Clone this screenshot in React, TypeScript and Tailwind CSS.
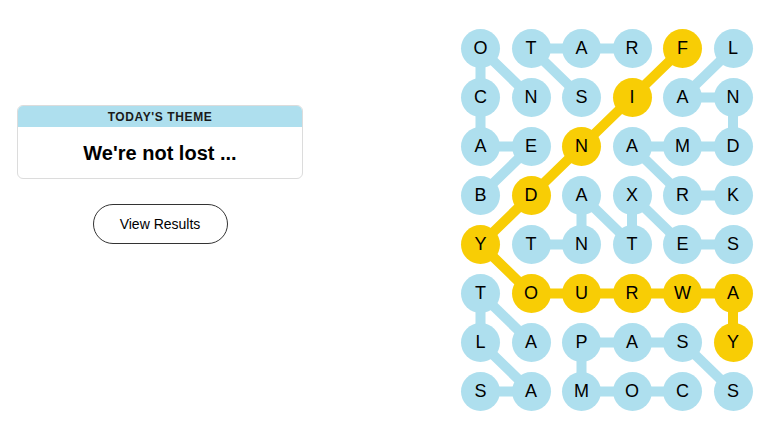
import React from "react";

const rows = [
  "OTARFL",
  "CNSIAN",
  "AENAMD",
  "BDAXRK",
  "YTNTES",
  "TOURWA",
  "LAPASY",
  "SAMOCS",
];

// spangram cells: [row, col]
const spangram: [number, number][] = [
  [0, 4], [1, 3], [2, 2], [3, 1], [4, 0], [5, 1], [5, 2], [5, 3], [5, 4], [5, 5], [6, 5],
];

// found word paths (blue)
const words: [number, number][][] = [
  [[1, 1], [0, 0], [1, 0], [2, 0], [2, 1], [3, 0]],
  [[1, 2], [0, 1], [0, 2], [0, 3]],
  [[0, 5], [1, 4], [1, 5], [2, 5], [2, 4], [2, 3], [3, 4], [3, 5]],
  [[4, 1], [4, 2], [3, 2], [4, 3], [3, 3], [4, 4], [4, 5]],
  [[5, 0], [6, 1]],
  [[5, 0], [6, 0], [7, 1], [7, 0]],
  [[6, 4], [6, 3], [6, 2], [7, 2], [7, 3], [7, 4]],
  [[6, 4], [7, 5]],
];

const COL = 50.5;
const ROW = 49;
const R = 19.5;

const isSpan = (r: number, c: number) => spangram.some(([a, b]) => a === r && b === c);

function pts(path: [number, number][]) {
  return path.map(([r, c]) => `${R + c * COL},${R + r * ROW}`).join(" ");
}

function Board() {
  return (
    <div className="relative w-[292px] h-[382px]">
      <svg className="absolute inset-0" width="292" height="382">
        {words.map((w, i) => (
          <polyline key={i} points={pts(w)} fill="none" stroke="#aedfee" strokeWidth="10" strokeLinejoin="round" />
        ))}
        <polyline points={pts(spangram)} fill="none" stroke="#f8cd05" strokeWidth="10" strokeLinejoin="round" />
      </svg>
      <div className="relative grid grid-cols-[repeat(6,39px)] gap-x-[11.5px] gap-y-[10px]">
        {rows.map((row, r) =>
          row.split("").map((ch, c) => (
            <div
              key={`${r}-${c}`}
              className={`w-[39px] h-[39px] rounded-full flex items-center justify-center text-[18px] text-black ${
                isSpan(r, c) ? "bg-[#f8cd05]" : "bg-[#aedfee]"
              }`}
            >
              {ch}
            </div>
          ))
        )}
      </div>
    </div>
  );
}

export default function App() {
  return (
    <div className="w-[768px] h-[432px] bg-white flex font-['Liberation_Sans',Arial,sans-serif] text-black">
      {/* Left: theme + results */}
      <div className="w-[320px] pt-[105px] pl-[17px]">
        <div className="w-[286px] rounded-md border border-[#dcdcdc] overflow-hidden">
          <div className="bg-[#aedfee] h-[21px] flex items-center justify-center text-[12px] font-semibold tracking-[0.05em] text-[#1a1a1a]">
            TODAY'S THEME
          </div>
          <div className="h-[51px] flex items-center justify-center text-[20px] font-bold">
            We're not lost ...
          </div>
        </div>
        <div className="w-[286px] flex justify-center mt-[25px]">
          <button className="w-[135px] h-[40px] rounded-full border border-[#333] text-[14px] text-black bg-white">
            View Results
          </button>
        </div>
      </div>

      {/* Right: board */}
      <div className="pt-[29px] pl-[141px]">
        <Board />
      </div>
    </div>
  );
}
